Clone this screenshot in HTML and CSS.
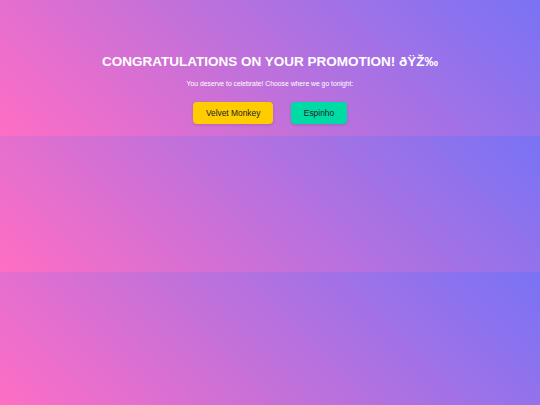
FILE: index.html
```html
<!DOCTYPE html>
<html>
<head>
<meta charset="utf-8">
<link rel="stylesheet" href="styles.css">
</head>
<body>
<div class="wrap">
  <h1 class="title">CONGRATULATIONS ON YOUR PROMOTION! ðŸŽ‰</h1>
  <p class="sub">You deserve to celebrate! Choose where we go tonight:</p>
  <div class="choices">
    <button class="btn btn-yellow">Velvet Monkey</button>
    <button class="btn btn-green">Espinho</button>
  </div>
</div>
</body>
</html>
```
FILE: styles.css
```css
html {
  margin: 0;
}
body {
  margin: 0;
  padding: 52px 20px 12px;
  background: linear-gradient(45deg, #ff6ec4, #7873f5);
  font-family: "Liberation Sans", Arial, sans-serif;
  color: #ffffff;
  text-align: center;
}
.title {
  font-size: 13.5px;
  font-weight: bold;
  margin: 0;
  line-height: 20px;
}
.sub {
  font-size: 6.8px;
  margin: 7px 0 0;
  line-height: 10px;
}
.choices {
  display: flex;
  justify-content: center;
  gap: 17.5px;
  margin-top: 13px;
}
.btn {
  font-family: "Liberation Sans", Arial, sans-serif;
  font-size: 8.4px;
  color: #222;
  border: none;
  border-radius: 4px;
  padding: 0 13px;
  height: 22px;
  box-shadow: 0 1px 3px rgba(0,0,0,0.15);
}
.btn-yellow {
  background: #ffcc00;
}
.btn-green {
  background: #00dba6;
}
```
